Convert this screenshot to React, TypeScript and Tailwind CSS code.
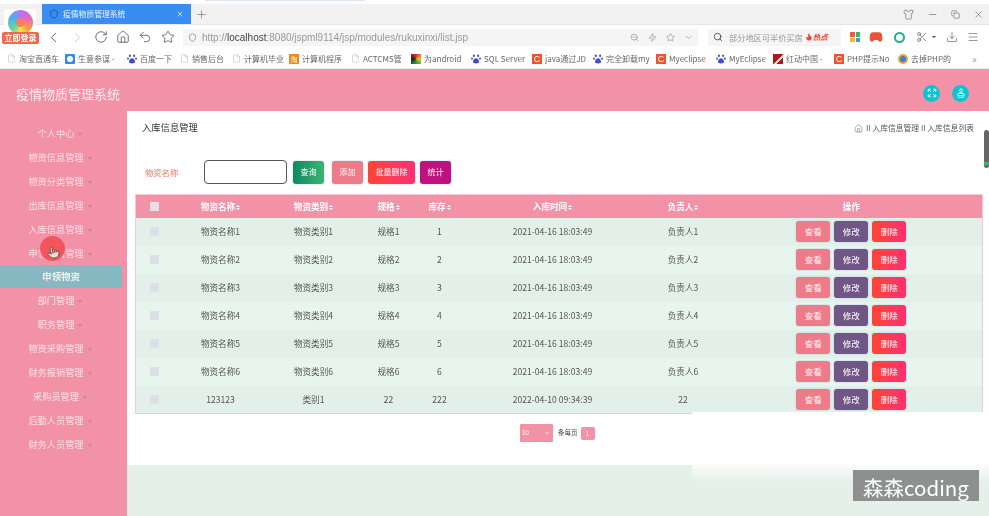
import {
  ChevronDown,
  ChevronLeft,
  ChevronRight,
  Copy,
  Download,
  Expand,
  File,
  Flame,
  Gamepad2,
  Home,
  Menu,
  Minus,
  Plus,
  Pointer,
  RotateCw,
  Scissors,
  Search,
  Shield,
  Shirt,
  Stamp,
  Star,
  Undo2,
  X,
  Zap,
  ZoomOut,
} from "lucide-react";

const PINK = "bg-[#f391a6]";

const bookmarks = [
  { label: "淘宝直通车", width: 58, kind: "file" },
  { label: "生意参谋 -", width: 62, kind: "blue" },
  { label: "百度一下", width: 53, kind: "paw" },
  { label: "销售后台", width: 52, kind: "file" },
  { label: "计算机毕业", width: 57, kind: "file" },
  { label: "计算机程序", width: 62, kind: "tao" },
  { label: "ACTCMS管", width: 60, kind: "file" },
  { label: "为android", width: 60, kind: "mosaic" },
  { label: "SQL Server", width: 61, kind: "paw" },
  { label: "java通过JD", width: 61, kind: "c" },
  { label: "完全卸载my", width: 63, kind: "paw" },
  { label: "Myeclipse", width: 60, kind: "c" },
  { label: "MyEclipse", width: 57, kind: "paw" },
  { label: "红动中国 -", width: 61, kind: "red" },
  { label: "PHP提示No", width: 64, kind: "c" },
  { label: "去掉PHP的", width: 70, kind: "ring" },
];

const menuItems = [
  "个人中心",
  "物资信息管理",
  "物资分类管理",
  "出库信息管理",
  "入库信息管理",
  "申领物资管理",
  "申领物资",
  "部门管理",
  "职务管理",
  "物资采购管理",
  "财务报销管理",
  "采购员管理",
  "后勤人员管理",
  "财务人员管理",
];

const rows = [
  ["物资名称1", "物资类别1", "规格1", "1", "2021-04-16 18:03:49", "负责人1"],
  ["物资名称2", "物资类别2", "规格2", "2", "2021-04-16 18:03:49", "负责人2"],
  ["物资名称3", "物资类别3", "规格3", "3", "2021-04-16 18:03:49", "负责人3"],
  ["物资名称4", "物资类别4", "规格4", "4", "2021-04-16 18:03:49", "负责人4"],
  ["物资名称5", "物资类别5", "规格5", "5", "2021-04-16 18:03:49", "负责人5"],
  ["物资名称6", "物资类别6", "规格6", "6", "2021-04-16 18:03:49", "负责人6"],
  ["123123", "类别1", "22", "222", "2022-04-10 09:34:39", "22"],
];

const headers = [
  { label: "物资名称", width: "w-[94px]" },
  { label: "物资类别", width: "w-[92px]" },
  { label: "规格", width: "w-[58px]" },
  { label: "库存", width: "w-[44px]" },
  { label: "入库时间", width: "w-[182px]" },
  { label: "负责人", width: "w-[79px]" },
];

function SortMark() {
  return (
    <span className="inline-flex flex-col align-middle ml-px gap-[1px]">
      <span className="block w-0 h-0 border-x-[2.5px] border-x-transparent border-b-[2.5px] border-b-white" />
      <span className="block w-0 h-0 border-x-[2.5px] border-x-transparent border-t-[2.5px] border-t-white" />
    </span>
  );
}

function BookmarkIcon({ kind }: { kind: string }) {
  if (kind === "file") {
    return <File size={9} strokeWidth={1.2} className="shrink-0 text-[#aaa]" />;
  }
  if (kind === "paw") {
    return (
      <svg width="10" height="10" viewBox="0 0 10 10" className="shrink-0" fill="#3b4fd0">
        <ellipse cx="2.9" cy="1.8" rx="1" ry="1.4" />
        <ellipse cx="7.1" cy="1.8" rx="1" ry="1.4" />
        <ellipse cx="1" cy="4.6" rx="0.9" ry="1.2" />
        <ellipse cx="9" cy="4.6" rx="0.9" ry="1.2" />
        <path d="M5 4.2c-1.6 0-3 2-3 3.6 0 1.3 1.2 1.6 3 1.6s3-.3 3-1.6C8 6.2 6.6 4.2 5 4.2z" />
      </svg>
    );
  }
  if (kind === "c") {
    return (
      <span className="w-[10px] h-[10px] shrink-0 bg-[#f0532e] text-white text-[9px] leading-[10px] text-center font-['Liberation_Sans',sans-serif]">
        C
      </span>
    );
  }
  if (kind === "tao") {
    return (
      <span className="w-[10px] h-[10px] shrink-0 bg-[#f28a1c] text-white text-[7px] leading-[10px] text-center">淘</span>
    );
  }
  if (kind === "blue") {
    return (
      <span className="w-[10px] h-[10px] shrink-0 rounded-[1px] bg-[#2f8fe8] flex items-center justify-center">
        <span className="w-[6px] h-[6px] rounded-full bg-white" />
      </span>
    );
  }
  if (kind === "mosaic") {
    return (
      <span className="w-[10px] h-[10px] shrink-0 bg-[conic-gradient(#e03020,#f0c020,#20a040,#202020,#e03020)]" />
    );
  }
  if (kind === "red") {
    return <span className="w-[10px] h-[10px] shrink-0 bg-[linear-gradient(135deg,#b01818_55%,#f4dada_55%,#f4dada_70%,#b01818_70%)]" />;
  }
  return <span className="w-[10px] h-[10px] shrink-0 rounded-full border-2 border-[#e8a33a] bg-[#3b7fd0]" />;
}

function BrowserChrome() {
  return (
    <div className="relative shrink-0 h-[69px] bg-white text-[#555]">
      <div className="h-1 bg-white">
        <div className="ml-[205px] w-[160px] h-px bg-[#dbe6f2]" />
      </div>

      <div className="flex items-center h-5 bg-[#f1f1f1]">
        <div className="ml-[42px] w-[149px] h-full bg-[#3a8df0] flex items-center px-[7px] text-white">
          <Shield size={10} className="text-[#1d4f9a]" />
          <span className="ml-1 text-[7.8px] flex-1 opacity-90">疫情物质管理系统</span>
          <X size={8} />
        </div>
        <Plus size={13} strokeWidth={1.2} className="ml-[4px] text-[#777]" />
        <div className="ml-auto flex items-center gap-[13px] pr-[5px]">
          <Shirt size={11} strokeWidth={1.2} />
          <Minus size={11} strokeWidth={1.2} />
          <Copy size={9} strokeWidth={1.4} />
          <X size={11} strokeWidth={1.2} />
        </div>
      </div>

      <div className="flex items-center h-[25px] border-t border-[#e6e6e6]">
        <ChevronLeft size={17} strokeWidth={1.3} className="ml-[45px]" />
        <ChevronRight size={17} strokeWidth={1.3} className="ml-[7px] text-[#ccc]" />
        <RotateCw size={14} strokeWidth={1.4} className="ml-[8px]" />
        <Home size={14} strokeWidth={1.4} className="ml-[8px]" />
        <Undo2 size={14} strokeWidth={1.4} className="ml-[8px]" />
        <Star size={14} strokeWidth={1.4} className="ml-[9px]" />

        <div className="ml-[8px] w-[515px] h-[17px] bg-[#f5f5f5] flex items-center px-[5px]">
          <Shield size={9} className="text-[#888]" />
          <span className="ml-[5px] text-[10px] text-[#999] font-['Liberation_Sans',sans-serif]">
            http://<span className="text-[#444]">localhost</span>:8080/jspml9114/jsp/modules/rukuxinxi/list.jsp
          </span>
          <div className="ml-auto flex items-center gap-[9px] text-[#999]">
            <ZoomOut size={9} />
            <Zap size={9} />
            <Star size={9} />
            <ChevronDown size={9} />
          </div>
        </div>

        <div className="ml-[10px] w-[133px] h-[17px] bg-[#f5f5f5] flex items-center px-[5px]">
          <Search size={10} className="text-[#444]" />
          <span className="ml-[6px] text-[8.2px] text-[#999]">部分地区可半价买房</span>
          <Flame size={8} className="ml-[2px] text-[#e8452c]" fill="#e8452c" />
          <span className="text-[7.5px] italic font-bold text-[#e8452c]">热点</span>
        </div>

        <div className="ml-[9px] w-[10px] h-[10px] grid grid-cols-2 gap-px">
          <span className="bg-[#ef5b3c]" />
          <span className="bg-[#3cb371]" />
          <span className="bg-[#f5b52c]" />
          <span className="bg-[#3a9ae8]" />
        </div>
        <Gamepad2 size={14} className="ml-[9px] text-[#e8533a]" fill="#e8533a" />
        <span className="ml-[11px] w-[11px] h-[11px] rounded-full border-[2.5px] border-[#20b08c]" />
        <Scissors size={12} strokeWidth={1.3} className="ml-[11px]" />
        <span className="ml-[4px] w-0 h-0 border-x-2 border-x-transparent border-t-2 border-t-[#444]" />
        <Download size={12} strokeWidth={1.3} className="ml-[10px]" />
        <Menu size={12} strokeWidth={1.2} className="ml-[9px]" />
      </div>

      <div className="flex items-center h-5 pl-[7px] border-b border-[#eee]">
        {bookmarks.map((b) => (
          <div key={b.label} className="flex items-center shrink-0" style={{ width: b.width }}>
            <BookmarkIcon kind={b.kind} />
            <span className="ml-[3px] text-[8px] text-[#666] whitespace-nowrap overflow-hidden w-[38px] flex-1 pr-2">
              {b.label}
            </span>
          </div>
        ))}
        <span className="ml-[4px] text-[10px] text-[#999]">»</span>
      </div>

      <div className="absolute left-[4px] top-[9px] w-[32px] h-[26px] bg-white flex justify-center pt-px">
        <div className="w-[25px] h-[25px] rounded-full bg-[conic-gradient(#c86af0_20deg,#f06ab0_70deg,#f5a03c_130deg,#f5e04c_180deg,#6ed4a4_230deg,#4ab0f0_300deg,#c86af0_380deg)] flex items-center justify-center">
          <div className="w-[9px] h-[9px] rounded-full bg-[#f5805a]" />
        </div>
      </div>
      <div className="absolute left-[2px] top-[32px] w-[37px] h-[12px] rounded-[2px] bg-[#f2684a] text-white text-[8px] font-bold leading-[12px] text-center">
        立即登录
      </div>
    </div>
  );
}

function Sidebar() {
  return (
    <aside className={`w-[127px] shrink-0 pt-[10px] ${PINK}`}>
      {menuItems.map((item) => {
        const isSub = item === "申领物资";
        return (
          <div
            key={item}
            className={
              isSub
                ? "w-[122px] h-[23px] bg-[#85b8c0] flex items-center justify-center text-[9.5px] font-bold text-[#f1f1f1]"
                : "w-[120px] h-[24px] pt-[2px] flex items-center justify-center text-[9.2px] text-[#fde3e8]"
            }
          >
            {item}
            {!isSub && (
              <span className="ml-[4px] w-0 h-0 border-x-[2.5px] border-x-transparent border-t-[3px] border-t-[#b98a98]" />
            )}
          </div>
        );
      })}
    </aside>
  );
}

function ActionButtons() {
  return (
    <div className="flex items-center justify-center gap-[4px] mt-[3px]">
      <button className="w-[34px] h-[21px] rounded-[3px] bg-[#ee7b88] text-white text-[8.5px] shadow-[0_0_2px_#a8c0e8]">查看</button>
      <button className="w-[34px] h-[21px] rounded-[3px] bg-[#6f5684] text-white text-[8.5px] shadow-[0_0_2px_#a8c0e8]">修改</button>
      <button className="w-[34px] h-[21px] rounded-[3px] bg-gradient-to-r from-[#ff4433] to-[#ff2f6e] text-white text-[8.5px] shadow-[0_0_2px_#a8c0e8]">删除</button>
    </div>
  );
}

function DataTable() {
  return (
    <table className="table-fixed w-[848px] border border-[#f5c8d8] border-collapse text-[8.6px] text-[#555]">
      <thead>
        <tr className={`h-[23px] text-white font-bold ${PINK}`}>
          <th className="w-[38px] font-normal">
            <span className="block mx-auto w-[9px] h-[9px] bg-[#e0e1e9]" />
          </th>
          {headers.map((h) => (
            <th key={h.label} className={`${h.width} font-bold`}>
              {h.label}
              <SortMark />
            </th>
          ))}
          <th className="font-bold pr-[2px]">操作</th>
        </tr>
      </thead>
      <tbody>
        {rows.map((row, i) => (
          <tr key={row[0]} className={`h-[28px] ${i % 2 === 0 ? "bg-[#e3f0ea]" : "bg-[#e8f5ef]"}`}>
            <td>
              <span className="block mx-auto w-[9px] h-[9px] bg-[#dcdfe6]" />
            </td>
            {row.map((cell, j) => (
              <td key={j} className="text-center">
                {cell}
              </td>
            ))}
            <td className="pr-[2px] align-top">
              <ActionButtons />
            </td>
          </tr>
        ))}
      </tbody>
    </table>
  );
}

function MainPanel() {
  return (
    <main className="flex-1 bg-[#e6f0ea]">
      <section className="h-[354px] bg-white pl-[8px]">
        <div className="flex items-center justify-between h-[34px] pl-[7px] pr-[15px]">
          <span className="text-[9.3px] text-[#333]">入库信息管理</span>
          <span className="flex items-center text-[7.8px] text-[#555]">
            <Home size={9} strokeWidth={1.2} className="mr-[3px]" />
            II 入库信息管理 II 入库信息列表
          </span>
        </div>

        <div className="flex items-center h-[24px] mt-[15px] ml-[10px] text-[8px] text-white">
          <label className="w-[59px] text-[8.3px] text-[#e9785e]">物资名称</label>
          <input className="w-[83px] h-[24px] border border-[#555] rounded-[4px] bg-white" />
          <button className="ml-[6px] w-[31px] h-[23px] rounded-[3px] bg-gradient-to-r from-[#0a8a60] to-[#3cb371] shadow-[0_0_2px_#a8c0e8]">查询</button>
          <button className="ml-[8px] w-[31px] h-[23px] rounded-[3px] bg-[#ee7b88] shadow-[0_0_2px_#a8c0e8]">添加</button>
          <button className="ml-[5px] w-[47px] h-[23px] rounded-[3px] bg-gradient-to-r from-[#ff4433] to-[#ff3070] shadow-[0_0_2px_#a8c0e8]">批量删除</button>
          <button className="ml-[5px] w-[31px] h-[23px] rounded-[3px] bg-[#c0127f] shadow-[0_0_2px_#a8c0e8]">统计</button>
        </div>

        <div className="mt-[10px]">
          <DataTable />
        </div>

        <div className="flex items-center mt-[10px] ml-[385px]">
          <div className="w-[33px] h-[18px] rounded-[1px] bg-[#f391a6] flex items-center justify-between px-[2px] text-[6.5px] text-white">
            10
            <ChevronDown size={8} />
          </div>
          <span className="ml-[5px] text-[6.5px] text-[#444]">条每页</span>
          <span className="ml-[3px] w-[14px] h-[13px] rounded-[2px] bg-[#f391a6] text-white text-[6.5px] text-center leading-[13px]">1</span>
        </div>
      </section>
    </main>
  );
}

export default function App() {
  return (
    <div className="relative h-[516px] w-[989px] overflow-hidden flex flex-col bg-white font-['Noto_Sans_CJK_SC','Noto_Sans',sans-serif] blur-[0.4px]">
      <BrowserChrome />

      <header className={`shrink-0 h-[42px] pt-[6px] flex items-center justify-between pl-[16px] pr-[20px] ${PINK}`}>
        <h1 className="text-[13px] mt-[2px] font-normal text-[#fdeef1]">疫情物质管理系统</h1>
        <div className="flex items-center gap-[12px]">
          <span className="w-[17px] h-[17px] rounded-full bg-[#0cc3d3] flex items-center justify-center text-white">
            <Expand size={10} />
          </span>
          <span className="w-[17px] h-[17px] rounded-full bg-[#0cc3d3] flex items-center justify-center text-white">
            <Stamp size={10} />
          </span>
        </div>
      </header>

      <div className="flex flex-1 min-h-0">
        <Sidebar />
        <MainPanel />
      </div>

      {/* cursor highlight from the screen recording */}
      <div className="absolute left-[40px] top-[236px] w-[25px] h-[25px] rounded-full bg-[#f2555c] flex items-center justify-center">
        <Pointer size={13} strokeWidth={1.3} className="text-[#333] mt-[7px] ml-[2px]" fill="#f6d9cf" />
      </div>

      {/* scrollbar thumb */}
      <div className="absolute left-[984px] top-[130px] w-[5px] h-[38px] rounded-full bg-[#666]">
        <div className="mt-[32px] h-[3px] bg-[#3cb371]" />
      </div>

      {/* video overlay: white patch and watermark */}
      <div className="absolute left-[692px] top-[412px] w-[297px] h-[70px] bg-gradient-to-b from-white via-white via-70% to-[#e6f0ea]" />
      <div className="absolute left-[853px] top-[470px] w-[126px] h-[31px] pt-[3px] bg-[#8d908e] flex items-center justify-center text-[20.5px] leading-none text-white whitespace-nowrap">
        森森coding
      </div>
    </div>
  );
}
